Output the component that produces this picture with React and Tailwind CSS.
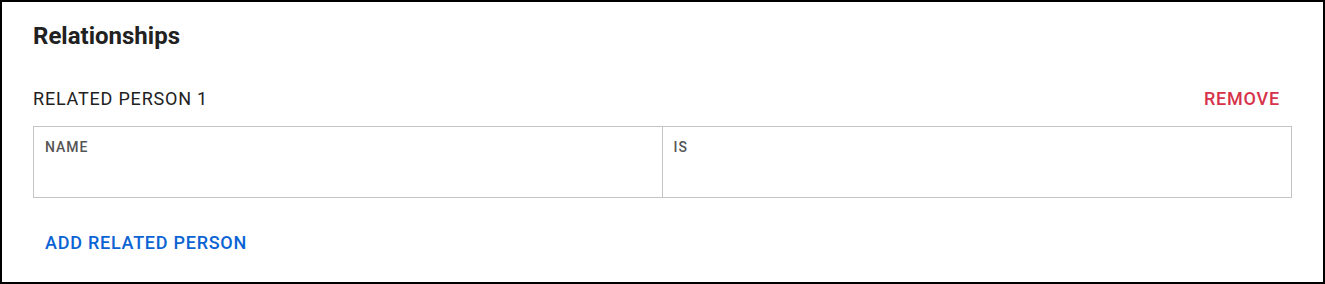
import React from 'react';

const App = () => {
  return (
    <div className="w-[1325px] h-[284px] bg-white border-2 border-black font-['Roboto',sans-serif] text-[#212121]">
      <div className="pl-[31px] pr-[31px] pt-[20px]">
        {/* Header */}
        <h2 className="text-[24px] leading-[28px] font-bold">Relationships</h2>

        {/* Related person */}
        <div className="mt-[37px] flex items-center justify-between">
          <h3 className="text-[18px] leading-[24px] font-normal tracking-[0.8px]">RELATED PERSON 1</h3>
          <button className="mr-[12px] text-[18px] leading-[24px] font-medium tracking-[0.8px] text-[#d6334a]">REMOVE</button>
        </div>
        <div className="mt-[15px] w-[1259px] h-[72px] grid grid-cols-2 border border-[#c4c4c4]">
          <div className="border-r border-[#c4c4c4] px-[11px] pt-[8px]">
            <span className="text-[14px] leading-[16px] font-medium tracking-[1px] text-[#555]">NAME</span>
          </div>
          <div className="px-[11px] pt-[8px]">
            <span className="text-[14px] leading-[16px] font-medium tracking-[1px] text-[#555]">IS</span>
          </div>
        </div>

        <button className="mt-[33px] ml-[12px] text-[18px] leading-[24px] font-medium tracking-[0.75px] text-[#0b63d4]">
          ADD RELATED PERSON
        </button>
      </div>
    </div>
  );
};

export default App;
